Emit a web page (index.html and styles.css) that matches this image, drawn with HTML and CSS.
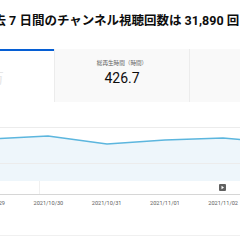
FILE: index.html
```html
<!DOCTYPE html>
<html lang="ja">
<head>
<meta charset="utf-8">
<link rel="stylesheet" href="styles.css">
</head>
<body>
<div class="page">
  <header class="header">
    <h1 class="title">過去 7 日間のチャンネル視聴回数は 31,890 回</h1>
  </header>
  <div class="tabs">
    <div class="tab tab-active">
      <div class="tab-label">視聴回数</div>
      <div class="tab-value">3.2万</div>
    </div>
    <div class="tab">
      <div class="tab-label">総再生時間（時間）</div>
      <div class="tab-value">426.7</div>
    </div>
    <div class="tab tab-wide">
      <div class="tab-label">チャンネル登録者</div>
      <div class="tab-value">+12</div>
    </div>
  </div>
  <div class="chart">
    <svg class="plot" width="240" height="79" viewBox="0 102 240 79">
      <line x1="0" y1="127.5" x2="240" y2="127.5" class="grid"/>
      <path class="area" d="M-10 139 L48 136 L107 144 L165 140 L223 138 L281 143 L281 181 L-10 181 Z"/>
      <line x1="0" y1="163.5" x2="240" y2="163.5" class="grid"/>
      <path class="line" d="M-10 139 L48 136 L107 144 L165 140 L223 138 L281 143"/>
    </svg>
    <div class="marker-row">
      <span class="tick"></span>
      <span class="marker"><svg width="7" height="7" viewBox="0 0 7 7"><rect width="7" height="7" rx="1" fill="#606060"/><path d="M2.5 1.8 L5 3.5 L2.5 5.2 Z" fill="#fff"/></svg></span>
    </div>
    <div class="dates">
      <span class="date">2021/10/29</span>
      <span class="date">2021/10/30</span>
      <span class="date">2021/10/31</span>
      <span class="date">2021/11/01</span>
      <span class="date">2021/11/02</span>
    </div>
  </div>
</div>
</body>
</html>
```

FILE: styles.css
```css
html, body {
  margin: 0;
  padding: 0;
  background: #ffffff;
}
body {
  width: 240px;
  height: 240px;
  overflow: hidden;
  font-family: Roboto, "Noto Sans CJK JP", sans-serif;
}
.page {
  width: 240px;
}
.header {
  height: 49px;
  display: flex;
  align-items: center;
  overflow: hidden;
}
.title {
  margin: 0 0 10px -19px;
  font-size: 12.5px;
  font-weight: 700;
  color: #0d0d0d;
  white-space: nowrap;
  letter-spacing: 0;
}
.tabs {
  display: flex;
  height: 53px;
  margin-left: -80px;
}
.tab {
  flex: 0 0 135px;
  background: #f9f9f9;
  border-left: 1px solid #ececec;
  display: flex;
  flex-direction: column;
  align-items: center;
  padding-top: 10px;
  box-sizing: border-box;
}
.tab-wide {
  flex-basis: 146px;
}
.tab-active {
  flex-basis: 134px;
  background: #ffffff;
  border-left: none;
  border-top: 2px solid #065fd4;
  padding-top: 8px;
}
.tab-label {
  font-size: 5.6px;
  color: #606060;
  line-height: 8px;
}
.tab-value {
  margin-top: 3px;
  font-size: 14px;
  color: #0d0d0d;
  line-height: 16px;
}
.tab-active .tab-label,
.tab-active .tab-value {
  color: #e6e6e6;
}
.chart {
  display: flex;
  flex-direction: column;
}
.plot {
  display: block;
}
.grid {
  stroke: #ececec;
  stroke-width: 1;
}
.area {
  fill: #eef6fb;
}
.line {
  fill: none;
  stroke: #5cb6de;
  stroke-width: 1.5;
  stroke-linejoin: round;
}
.marker-row {
  height: 13px;
  border-bottom: 1px solid #d6d6d6;
  display: flex;
  align-items: center;
  justify-content: space-between;
  padding: 0 14px 0 39px;
}
.tick {
  width: 1px;
  height: 13px;
  background: #f0f0f0;
  align-self: flex-end;
}
.marker {
  display: flex;
  margin-top: -1px;
}
.dates {
  display: flex;
  margin-left: -39px;
  height: 41px;
  padding-top: 4px;
  box-sizing: border-box;
  align-items: flex-start;
  border-bottom: 1px solid #f0f0f0;
}
.date {
  flex: 0 0 58.25px;
  text-align: center;
  font-size: 5.6px;
  color: #606060;
  line-height: 8px;
}
```
